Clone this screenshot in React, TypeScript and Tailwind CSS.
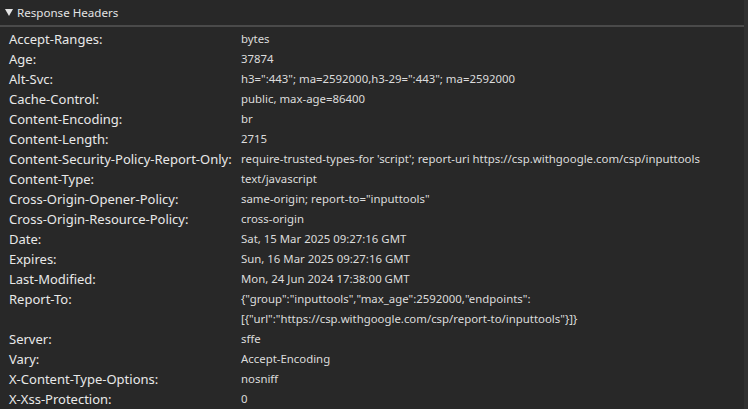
import React from "react";

const rows: [string, string[]][] = [
  ["Accept-Ranges:", ["bytes"]],
  ["Age:", ["37874"]],
  ["Alt-Svc:", ['h3=":443"; ma=2592000,h3-29=":443"; ma=2592000']],
  ["Cache-Control:", ["public, max-age=86400"]],
  ["Content-Encoding:", ["br"]],
  ["Content-Length:", ["2715"]],
  ["Content-Security-Policy-Report-Only:", ["require-trusted-types-for 'script'; report-uri https://csp.withgoogle.com/csp/inputtools"]],
  ["Content-Type:", ["text/javascript"]],
  ["Cross-Origin-Opener-Policy:", ['same-origin; report-to="inputtools"']],
  ["Cross-Origin-Resource-Policy:", ["cross-origin"]],
  ["Date:", ["Sat, 15 Mar 2025 09:27:16 GMT"]],
  ["Expires:", ["Sun, 16 Mar 2025 09:27:16 GMT"]],
  ["Last-Modified:", ["Mon, 24 Jun 2024 17:38:00 GMT"]],
  ["Report-To:", ['{"group":"inputtools","max_age":2592000,"endpoints":', '[{"url":"https://csp.withgoogle.com/csp/report-to/inputtools"}]}']],
  ["Server:", ["sffe"]],
  ["Vary:", ["Accept-Encoding"]],
  ["X-Content-Type-Options:", ["nosniff"]],
  ["X-Xss-Protection:", ["0"]],
];

export default function App() {
  return (
    <div
      className="w-[748px] h-[409px] overflow-hidden bg-[#282828] text-[#e3e3e3] flex"
      style={{ fontFamily: '"Noto Sans", "Open Sans", sans-serif' }}
    >
      <div className="flex-1 flex flex-col">
        <div className="h-[27px] flex items-center pl-[5px] gap-[4px] border-b-2 border-[#4a4a4a] text-[11.6px]">
          <svg width="8" height="7" viewBox="0 0 8 7" className="shrink-0">
            <path d="M0 0 H8 L4 7 Z" fill="#e3e3e3" />
          </svg>
          <span>Response Headers</span>
        </div>
        <div className="pt-[2px] flex flex-col">
          {rows.map(([k, vs]) => (
            <div key={k} className="flex leading-[20px]">
              <div className="w-[241px] pl-[9px] shrink-0 text-[13px] text-[#e8e8e8]">{k}</div>
              <div className="flex flex-col text-[11.4px] text-[#dcdcdc]">
                {vs.map((v, i) => (
                  <div key={i} className="whitespace-nowrap">{v}</div>
                ))}
              </div>
            </div>
          ))}
        </div>
      </div>
      <div className="w-[4px] bg-[#303030]" />
    </div>
  );
}
